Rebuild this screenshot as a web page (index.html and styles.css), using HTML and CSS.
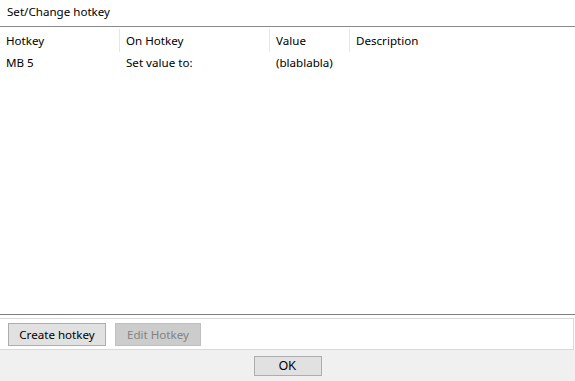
FILE: index.html
```html
<!DOCTYPE html>
<html>
<head>
<meta charset="utf-8">
<link rel="stylesheet" href="styles.css">
</head>
<body>
<div class="window">
  <div class="title">Set/Change hotkey</div>
  <div class="list">
    <div class="row head">
      <div class="cell c1">Hotkey</div>
      <div class="cell c2">On Hotkey</div>
      <div class="cell c3">Value</div>
      <div class="cell c4">Description</div>
    </div>
    <div class="row item">
      <div class="cell c1">MB 5</div>
      <div class="cell c2">Set value to:</div>
      <div class="cell c3">(blablabla)</div>
      <div class="cell c4"></div>
    </div>
  </div>
  <div class="toolbar">
    <div class="panel">
      <button class="btn create">Create hotkey</button>
      <button class="btn edit disabled">Edit Hotkey</button>
    </div>
  </div>
  <div class="footer">
    <button class="ok">OK</button>
  </div>
</div>
</body>
</html>
```
FILE: styles.css
```css
html, body {
  margin: 0;
  padding: 0;
  background: #ffffff;
}
.window {
  width: 575px;
  height: 381px;
  display: flex;
  flex-direction: column;
  font-family: "Noto Sans", "Liberation Sans", sans-serif;
  font-size: 11.6px;
  color: #000;
}
.title {
  line-height: 24px;
  padding-left: 7px;
  border-bottom: 1px solid #8a8a8a;
  box-sizing: border-box;
  height: 27px;
  flex: none;
}
.list {
  flex: 1;
  background: #fff;
  border-bottom: 1px solid #7f7f7f;
}
.row {
  display: flex;
}
.head {
  height: 25px;
  padding-top: 2px;
  box-sizing: border-box;
}
.head .cell {
  border-right: 1px solid #e5e5e5;
  line-height: 23px;
}
.head .c4 {
  border-right: none;
}
.item .cell {
  line-height: 21px;
}
.cell {
  padding-left: 6px;
  box-sizing: border-box;
  white-space: nowrap;
}
.c1 { width: 120px; }
.c2 { width: 150px; }
.c3 { width: 80px; }
.c4 { flex: 1; }
.toolbar {
  background: #fff;
  padding: 3px 1px 0 0;
  height: 35px;
  box-sizing: border-box;
  flex: none;
}
.panel {
  height: 32px;
  border: 1px solid #d9d9d9;
  border-left: none;
  box-sizing: border-box;
  display: flex;
  align-items: flex-start;
  gap: 9px;
  padding-left: 8px;
  padding-top: 4px;
}
.btn {
  height: 23px;
  font-family: inherit;
  font-size: 11.6px;
  background: #e1e1e1;
  border: 1px solid #adadad;
  padding: 0;
  color: #000;
}
.create { width: 98px; }
.edit { width: 86px; }
.btn.disabled {
  background: #cccccc;
  border-color: #bfbfbf;
  color: #838383;
}
.footer {
  height: 31px;
  background: #f0f0f0;
  display: flex;
  justify-content: center;
  align-items: flex-start;
  padding-top: 6px;
  box-sizing: border-box;
  flex: none;
}
.ok {
  width: 68px;
  height: 20px;
  background: #e1e1e1;
  border: 1px solid #adadad;
  font-family: "Liberation Sans", sans-serif;
  font-size: 12px;
  padding: 0;
  color: #000;
}
```
